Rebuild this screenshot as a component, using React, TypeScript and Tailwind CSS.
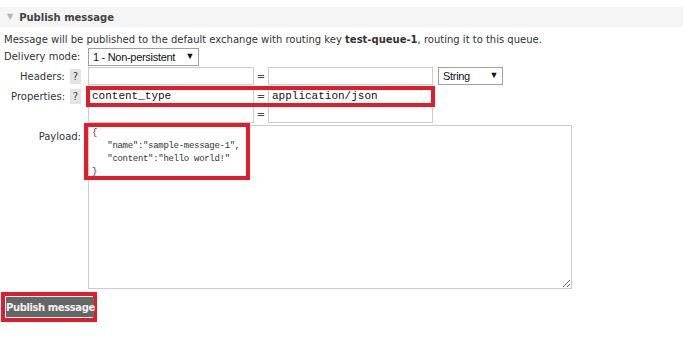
export default function App() {
  const label = "w-[84px] pr-[3px] flex justify-end items-center gap-[5px] shrink-0";
  const qmark = "w-[11px] h-[15px] bg-[#e4e4e4] text-[#444] text-[10px] flex items-center justify-center";
  const input = "h-full border border-[#cccccc] bg-white shrink-0";
  const select =
    "h-[18px] border border-[#a0a0a0] bg-white flex items-center justify-between px-[4px] font-['Liberation_Sans',Arial,sans-serif] text-[11px] tracking-[-0.3px] text-[#111] whitespace-nowrap shrink-0";

  return (
    <div className="w-[700px] h-[345px] bg-white font-['DejaVu_Sans',Verdana,sans-serif] text-[10px] text-[#333] pt-[7px] overflow-hidden">
      {/* header */}
      <div className="w-[683px] h-[20px] bg-[#f5f5f5] flex items-center pl-[7px]">
        <span className="text-[#b5b5b5] text-[8px] mr-[6px]">▼</span>
        <span className="font-bold text-[10px] text-[#444]">Publish message</span>
      </div>

      <p className="mt-[6px] h-[14px] pl-[4px] leading-[14px] whitespace-nowrap">
        Message will be published to the default exchange with routing key <b>test-queue-1</b>, routing it to this queue.
      </p>

      {/* delivery mode */}
      <div className="mt-[1px] h-[17px] flex">
        <div className="w-[84px] pl-[4px] flex items-center whitespace-nowrap">Delivery mode:</div>
        <div className={`${select} ml-[4px] w-[111px]`}>
          <span>1 - Non-persistent</span>
          <span className="text-[9px]">▼</span>
        </div>
      </div>

      {/* headers */}
      <div className="mt-[2px] h-[18px] flex">
        <div className={label}>
          <span>Headers:</span>
          <span className={qmark}>?</span>
        </div>
        <div className="ml-[4px] flex items-center h-full">
          <div className={`${input} w-[166px]`} />
          <span className="w-[14px] text-center text-[#444]">=</span>
          <div className={`${input} w-[165px]`} />
          <div className={`${select} ml-[5px] w-[65px]`}>
            <span>String</span>
            <span className="text-[9px]">▼</span>
          </div>
        </div>
      </div>

      {/* properties */}
      <div className="mt-[3px] h-[17px] flex">
        <div className={label}>
          <span>Properties:</span>
          <span className={qmark}>?</span>
        </div>
        <div className="ml-[4px] flex items-center h-full relative">
          <div className={`${input} w-[166px] bg-[#ffffc4] flex items-center pl-[3px] font-['Liberation_Mono',monospace] text-[11px] text-[#111]`}>
            content_type
          </div>
          <span className="w-[14px] text-center text-[#444]">=</span>
          <div className={`${input} w-[165px] flex items-center pl-[3px] font-['Liberation_Mono',monospace] text-[11px] text-[#111]`}>
            application/json
          </div>
          <div className="absolute left-[-2px] top-[-2px] w-[349px] h-[21px] border-[4px] border-[#e21d2a]" />
        </div>
      </div>

      {/* empty property row */}
      <div className="mt-[1px] h-[17px] flex">
        <div className="w-[84px]" />
        <div className="ml-[4px] flex items-center h-full">
          <div className={`${input} w-[166px]`} />
          <span className="w-[14px] text-center text-[#444]">=</span>
          <div className={`${input} w-[165px]`} />
        </div>
      </div>

      {/* payload */}
      <div className="mt-[2px] h-[164px] flex">
        <div className="w-[84px] pr-[3px] flex justify-end pt-[4px]">Payload:</div>
        <div className="ml-[4px] relative">
          <textarea
            readOnly
            className="w-[484px] h-[164px] border border-[#cccccc] bg-white pl-[3px] pt-[1px] font-['Liberation_Mono',monospace] text-[9px] leading-[13px] tracking-[-0.3px] text-[#333] resize-y outline-none"
            defaultValue={'{\n   "name":"sample-message-1",\n   "content":"hello world!"\n}'}
          />
          <div className="absolute left-[-4px] top-[-2px] w-[166px] h-[57px] border-[4px] border-[#e21d2a] pointer-events-none" />
        </div>
      </div>

      {/* button */}
      <div className="mt-[3px] ml-[1px] w-[96px] h-[30px] border-[4px] border-[#e21d2a] flex">
        <button className="m-px w-full bg-[#666666] text-[#f2f2f2] font-semibold text-[10px] tracking-[-0.4px] whitespace-nowrap">
          Publish message
        </button>
      </div>
    </div>
  );
}
